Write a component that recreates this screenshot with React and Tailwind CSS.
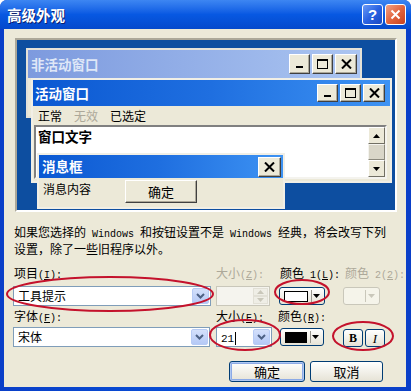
import React from "react";

const MONO = "font-['Liberation_Mono',monospace] text-[10px]";

function Mono({ children }) {
  return <span className={MONO}>{children}</span>;
}

function Glyph({ kind }) {
  if (kind === "min")
    return (
      <svg width="10" height="10" viewBox="0 0 10 10">
        <rect x="1" y="7" width="7" height="2" fill="#000" />
      </svg>
    );
  if (kind === "max")
    return (
      <svg width="11" height="10" viewBox="0 0 11 10">
        <rect x="0.5" y="0.5" width="10" height="9" fill="none" stroke="#000" />
        <rect x="0" y="0" width="11" height="2" fill="#000" />
      </svg>
    );
  return (
    <svg width="11" height="10" viewBox="0 0 11 10">
      <path d="M1 0.5 L10 9.5 M10 0.5 L1 9.5" stroke="#000" strokeWidth="2" />
    </svg>
  );
}

function TitleBtn({ kind, size }) {
  return (
    <div
      className={`flex items-center justify-center bg-[#ece9d8] border border-t-white border-l-white border-r-[#404040] border-b-[#404040] shadow-[inset_-1px_-1px_0_#aca899] ${size}`}
    >
      <Glyph kind={kind} />
    </div>
  );
}

function DropBtn() {
  return (
    <div className="w-[17px] h-full flex items-center justify-center bg-gradient-to-b from-[#d4e0fb] to-[#b5c9f6] border border-[#b7cbf5] rounded-[2px]">
      <svg width="9" height="6" viewBox="0 0 9 6">
        <path d="M1 1 L4.5 4.5 L8 1" fill="none" stroke="#4d6185" strokeWidth="2" />
      </svg>
    </div>
  );
}

function Combo({ width, children }) {
  return (
    <div className={`flex h-[20px] bg-white border border-[#7f9db9] p-[1px] ${width}`}>
      <div className="flex-1 pl-[3px] leading-[16px] whitespace-nowrap">{children}</div>
      <DropBtn />
    </div>
  );
}

function ArrowTri({ color, down }) {
  return (
    <svg width="7" height="4" viewBox="0 0 7 4">
      <path d={down ? "M0 0 L7 0 L3.5 4 Z" : "M0 4 L7 4 L3.5 0 Z"} fill={color} />
    </svg>
  );
}

function ClassicScrollBtn({ down, h }) {
  return (
    <div
      className={`flex items-center justify-center bg-[#ece9d8] border border-t-white border-l-white border-r-[#716f64] border-b-[#716f64] ${h}`}
    >
      <ArrowTri color="#000" down={down} />
    </div>
  );
}

export default function App() {
  return (
    <div className="relative w-[411px] h-[391px] overflow-hidden bg-white font-['Noto_Sans_CJK_SC',sans-serif] text-[12px] text-black">
      <div className="flex flex-col w-full h-full rounded-t-[7px] bg-gradient-to-r from-[#0a3fc8] via-[#0850d8] to-[#0a3fc8]">
        {/* Title bar */}
        <div className="h-[29px] flex items-center pl-[7px] pr-[5px] rounded-t-[7px] bg-gradient-to-b from-[#3d86f2] via-[#0758e2] to-[#0549cc]">
          <div className="flex-1 text-white font-bold text-[14.5px] leading-[16px] [text-shadow:1px_1px_0_#0a1e6e] whitespace-nowrap">
            高级外观
          </div>
          <div className="flex gap-[2px]">
            <div className="w-[21px] h-[21px] rounded-[3px] border border-white bg-gradient-to-br from-[#6a9af6] via-[#2a62e2] to-[#1a48c2] flex items-center justify-center text-white font-bold text-[15px] leading-none font-['Liberation_Sans',sans-serif]">
              ?
            </div>
            <div className="w-[21px] h-[21px] rounded-[3px] border border-white bg-gradient-to-br from-[#f2a183] via-[#e2653f] to-[#c6401c] flex items-center justify-center">
              <svg width="11" height="11" viewBox="0 0 11 11">
                <path d="M1.5 1.5 L9.5 9.5 M9.5 1.5 L1.5 9.5" stroke="#fff" strokeWidth="2" />
              </svg>
            </div>
          </div>
        </div>

        {/* Client area */}
        <div className="flex-1 ml-[4px] mr-[5px] mb-[4px] bg-[#ece9d8] flex flex-col pt-[9px]">
          {/* Preview */}
          <div className="relative ml-[11px] w-[382px] h-[174px] bg-[#0d4ea0] border-2 border-t-[#aca899] border-l-[#aca899] border-r-white border-b-white">
            {/* Inactive window */}
            <div className="absolute left-[9px] top-[8px] w-[336px] h-[70px] bg-[#ece9d8] border-2 border-[#e4e2d8]">
              <div className="h-[28px] flex items-center pl-[3px] pr-[3px] bg-gradient-to-r from-[#7d9ade] to-[#abc5f1]">
                <div className="flex-1 text-[#dfe7f7] font-bold text-[13.5px] whitespace-nowrap">非活动窗口</div>
                <div className="flex gap-[2px]">
                  <TitleBtn kind="min" size="w-[21px] h-[20px]" />
                  <TitleBtn kind="max" size="w-[21px] h-[20px]" />
                  <TitleBtn kind="close" size="w-[22px] h-[20px]" />
                </div>
              </div>
            </div>

            {/* Active window */}
            <div className="absolute left-[14px] top-[38px] w-[361px] h-[105px] bg-[#ece9d8] border-2 border-[#f1efe6] flex flex-col">
              <div className="h-[26px] flex items-center pl-[2px] pr-[5px] bg-gradient-to-r from-[#0a58d2] via-[#1f6fe0] to-[#3e93f3]">
                <div className="flex-1 text-white font-bold text-[13.5px] whitespace-nowrap">活动窗口</div>
                <div className="flex gap-[2px]">
                  <TitleBtn kind="min" size="w-[21px] h-[18px]" />
                  <TitleBtn kind="max" size="w-[21px] h-[18px]" />
                  <TitleBtn kind="close" size="w-[22px] h-[18px]" />
                </div>
              </div>
              <div className="h-[19px] flex items-center gap-[12px] pl-[5px] leading-[14px] whitespace-nowrap">
                <span>正常</span>
                <span className="text-[#aca899]">无效</span>
                <span>已选定</span>
              </div>
              <div className="ml-[1px] mr-[3px] h-[54px] flex bg-white border-2 border-t-[#808080] border-l-[#808080] border-r-[#f4f3ee] border-b-[#f4f3ee]">
                <div className="flex-1 pl-[2px] pt-[1px] font-bold text-[13.5px] leading-[16px] whitespace-nowrap">窗口文字</div>
                <div className="w-[17px] flex flex-col">
                  <ClassicScrollBtn h="h-[17px]" />
                  <div className="flex-1 bg-[#d9d6c8] border border-t-[#f4f3ee] border-l-[#f4f3ee] border-r-[#8a887c] border-b-[#8a887c]" />
                  <ClassicScrollBtn down h="h-[17px]" />
                </div>
              </div>
            </div>

            {/* Message box */}
            <div className="absolute left-[20px] top-[113px] w-[248px] h-[56px] bg-[#ece9d8] border-2 border-[#f1efe6] flex flex-col">
              <div className="h-[23px] flex items-center pl-[3px] pr-[2px] bg-gradient-to-r from-[#0a58d2] via-[#1f6fe0] to-[#3e93f3]">
                <div className="flex-1 text-white font-bold text-[13.5px] whitespace-nowrap">消息框</div>
                <TitleBtn kind="close" size="w-[23px] h-[20px]" />
              </div>
              <div className="flex-1 flex items-start">
                <div className="pl-[4px] pt-[4px] w-[86px] leading-[14px] whitespace-nowrap">消息内容</div>
                <div className="mt-[2px] w-[72px] h-[23px] flex items-center justify-center bg-[#ece9d8] border border-t-white border-l-white border-r-[#404040] border-b-[#404040] shadow-[inset_-1px_-1px_0_#aca899] text-[13px] whitespace-nowrap">
                  确定
                </div>
              </div>
            </div>
          </div>

          {/* Description */}
          <div className="mt-[13px] pl-[10px] leading-[14px] whitespace-nowrap">
            <div>
              如果您选择的<Mono> Windows </Mono>和按钮设置不是<Mono> Windows </Mono>经典，将会改写下列
            </div>
            <div>设置，除了一些旧程序以外。</div>
          </div>

          {/* Row 1 labels */}
          <div className="flex pl-[9px] mt-[10px] h-[14px] leading-[14px] whitespace-nowrap">
            <div className="w-[203px] pl-[1px]">
              项目<Mono>(<u>I</u>):</Mono>
            </div>
            <div className="w-[64px] text-[#aca899]">
              大小<Mono>(<u>Z</u>):</Mono>
            </div>
            <div className="w-[65px]">
              颜色<Mono> 1(<u>L</u>):</Mono>
            </div>
            <div className="text-[#aca899]">
              颜色<Mono> 2(<u>2</u>):</Mono>
            </div>
          </div>

          {/* Row 1 controls */}
          <div className="flex pl-[9px] mt-[6px] h-[20px]">
            <div className="w-[203px]">
              <Combo width="w-[198px]">工具提示</Combo>
            </div>
            <div className="w-[63px]">
              <div className="w-[54px] h-[20px] flex bg-[#f5f4ee] border border-[#c9c7ba] p-[1px]">
                <div className="flex-1" />
                <div className="w-[15px] flex flex-col">
                  <div className="flex-1 flex items-center justify-center border border-[#e2e0d6] bg-[#efeee6]">
                    <ArrowTri color="#c9c7ba" />
                  </div>
                  <div className="flex-1 flex items-center justify-center border border-[#e2e0d6] bg-[#efeee6]">
                    <ArrowTri color="#c9c7ba" down />
                  </div>
                </div>
              </div>
            </div>
            <div className="w-[64px] pt-[1px]">
              <div className="w-[46px] h-[18px] flex items-center pl-[4px] pr-[3px] rounded-[3px] border border-[#003c74] bg-gradient-to-b from-white to-[#e6e3d6]">
                <div className="w-[24px] h-[11px] bg-white border border-black" />
                <div className="ml-[3px] w-[1px] h-[12px] bg-[#9a9890]" />
                <div className="flex-1 flex justify-center">
                  <ArrowTri color="#000" down />
                </div>
              </div>
            </div>
            <div className="pt-[1px]">
              <div className="w-[37px] h-[18px] flex items-center pr-[3px] rounded-[3px] border border-[#c9c7ba] bg-[#f5f4ea]">
                <div className="flex-1" />
                <div className="w-[1px] h-[12px] bg-[#c9c7ba]" />
                <div className="w-[10px] flex justify-center">
                  <ArrowTri color="#c9c7ba" down />
                </div>
              </div>
            </div>
          </div>

          {/* Row 2 labels */}
          <div className="flex pl-[9px] mt-[3px] h-[14px] leading-[14px] whitespace-nowrap">
            <div className="w-[203px] pl-[1px]">
              字体<Mono>(<u>F</u>):</Mono>
            </div>
            <div className="w-[62px]">
              大小<Mono>(<u>E</u>):</Mono>
            </div>
            <div>
              颜色<Mono>(<u>R</u>):</Mono>
            </div>
          </div>

          {/* Row 2 controls */}
          <div className="flex pl-[9px] mt-[4px] h-[20px]">
            <div className="w-[203px]">
              <Combo width="w-[197px]">宋体</Combo>
            </div>
            <div className="w-[64px]">
              <Combo width="w-[56px]">
                <span className="font-['Liberation_Mono',monospace] text-[11px]">21</span>
                <span className="inline-block w-[1px] h-[13px] bg-black align-middle ml-[1px]" />
              </Combo>
            </div>
            <div className="w-[63px] pt-[1px]">
              <div className="w-[44px] h-[18px] flex items-center pl-[4px] pr-[3px] rounded-[3px] border border-[#003c74] bg-gradient-to-b from-white to-[#e6e3d6]">
                <div className="w-[22px] h-[11px] bg-black border border-black" />
                <div className="ml-[3px] w-[1px] h-[12px] bg-[#9a9890]" />
                <div className="flex-1 flex justify-center">
                  <ArrowTri color="#000" down />
                </div>
              </div>
            </div>
            <div className="flex gap-[2px] pt-[2px]">
              <div className="w-[20px] h-[18px] flex items-center justify-center rounded-[3px] border border-[#003c74] bg-gradient-to-b from-white to-[#e6e3d6] font-['Liberation_Serif',serif] font-bold text-[12px] leading-none">
                B
              </div>
              <div className="w-[20px] h-[18px] flex items-center justify-center rounded-[3px] border border-[#003c74] bg-gradient-to-b from-white to-[#e6e3d6] font-['Liberation_Serif',serif] italic text-[13px] leading-none">
                I
              </div>
            </div>
          </div>

          {/* OK / Cancel */}
          <div className="flex justify-end gap-[5px] pr-[23px] mt-[14px]">
            <div className="w-[76px] h-[21px] flex items-center justify-center rounded-[3px] border border-[#003c74] bg-gradient-to-b from-white to-[#e6e3d6] shadow-[inset_0_0_0_1px_#b0c8f2,inset_0_0_0_2px_#8caae6] text-[13px] leading-none">
              确定
            </div>
            <div className="w-[73px] h-[21px] flex items-center justify-center rounded-[3px] border border-[#003c74] bg-gradient-to-b from-white to-[#e6e3d6] text-[13px] leading-none">
              取消
            </div>
          </div>
        </div>
      </div>

      {/* Red annotation ellipses */}
      <svg className="absolute left-0 top-0 pointer-events-none" width="411" height="391" viewBox="0 0 411 391">
        <g fill="none" stroke="#c4122c" strokeWidth="2">
          <ellipse cx="110" cy="294" rx="103" ry="17" />
          <ellipse cx="302" cy="292" rx="27" ry="12" />
          <ellipse cx="245" cy="335" rx="35" ry="15" />
          <ellipse cx="363" cy="336" rx="30" ry="14" />
        </g>
      </svg>
    </div>
  );
}
